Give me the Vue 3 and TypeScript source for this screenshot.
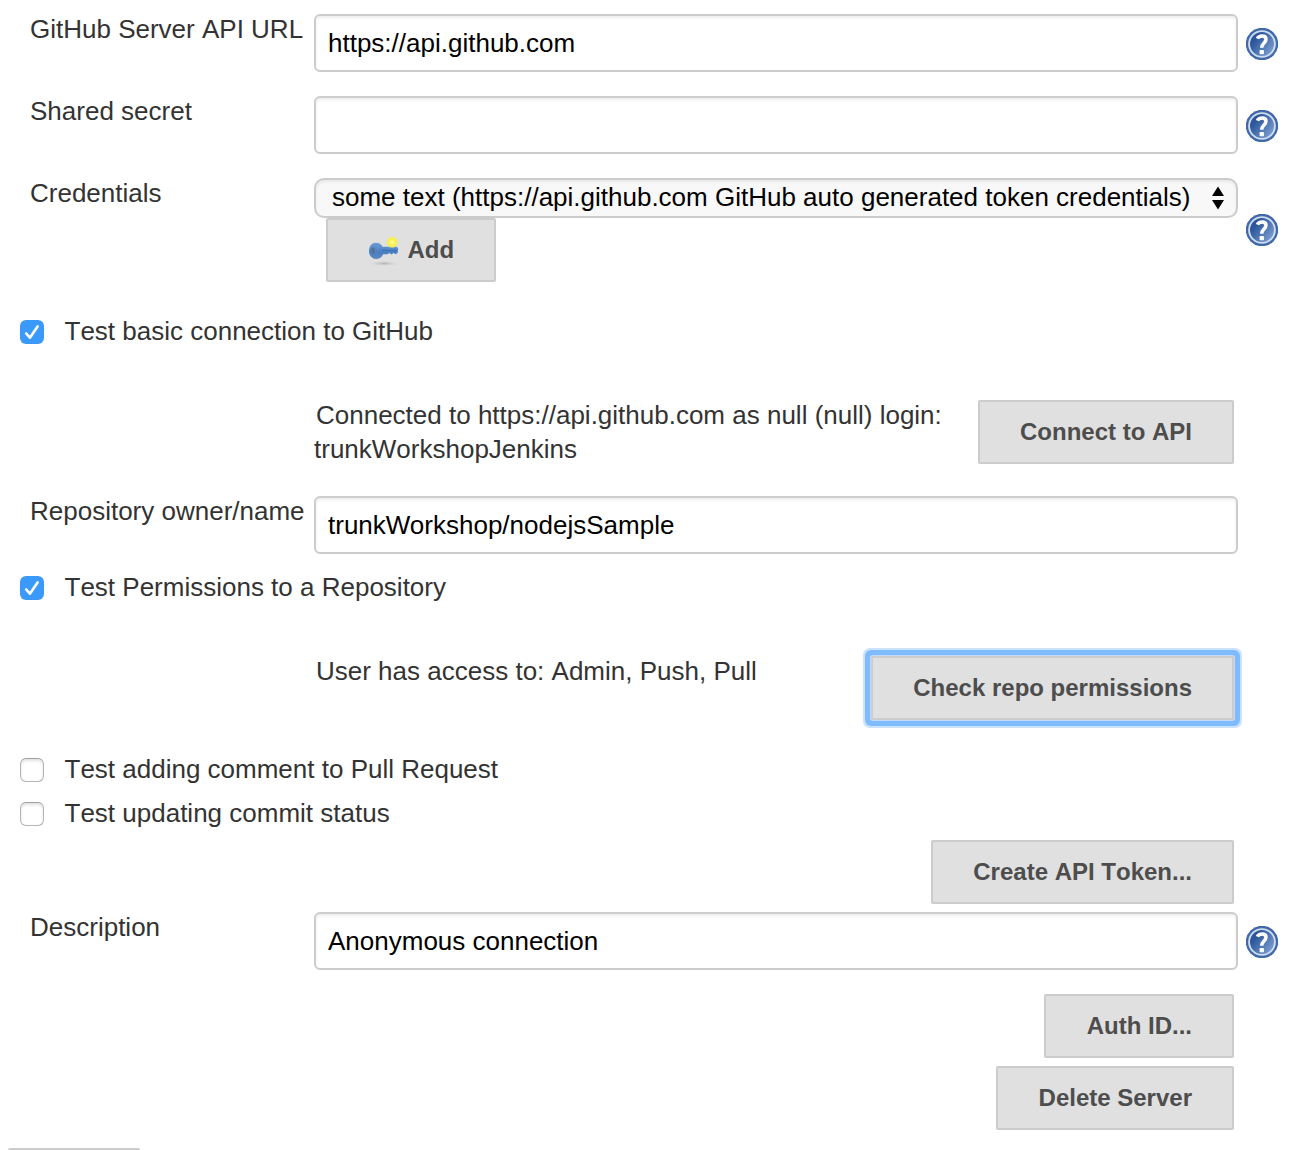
<script setup lang="ts">
import { defineComponent, h, ref } from 'vue'

const apiUrl = ref('https://api.github.com')
const secret = ref('')
const repository = ref('trunkWorkshop/nodejsSample')
const description = ref('Anonymous connection')
const testConnection = ref(true)
const testPermissions = ref(true)
const testComment = ref(false)
const testStatus = ref(false)

const HelpIcon = defineComponent({
  props: { uid: { type: String, required: true } },
  setup(props) {
    return () =>
      h('svg', { width: 32, height: 32, viewBox: '0 0 32 32', role: 'img' }, [
        h('defs', [
          h('linearGradient', { id: props.uid, x1: '0', y1: '0.1', x2: '1', y2: '0.9' }, [
            h('stop', { offset: '0.25', 'stop-color': '#2b569b' }),
            h('stop', { offset: '1', 'stop-color': '#86a9d8' }),
          ]),
        ]),
        h('circle', { cx: 16, cy: 16, r: 16.2, fill: '#4169a8' }),
        h('circle', { cx: 16, cy: 16, r: 12.9, fill: `url(#${props.uid})`, stroke: '#cfdcef', 'stroke-width': 1.9 }),
        h('path', {
          d: 'M11.4 10.6c.8-1.8 2.5-2.6 4.8-2.6 2.4 0 3.8 1.2 3.8 3.300 0 3.700-4.300 3.700-4.300 8.500',
          fill: 'none',
          stroke: '#fff',
          'stroke-width': 3.5,
        }),
        h('rect', { x: 13.6, y: 21.9, width: 4.3, height: 4.3, rx: 0.8, fill: '#fff' }),
      ])
  },
})
</script>

<template>
  <main class="page">
    <section class="row field">
      <label class="label">GitHub Server API URL</label>
      <input v-model="apiUrl" class="input" type="text" />
      <HelpIcon uid="help-url" class="help" />
    </section>
    <section class="row field">
      <label class="label">Shared secret</label>
      <input v-model="secret" class="input" type="text" />
      <HelpIcon uid="help-secret" class="help" />
    </section>
    <section class="row credentials">
      <label class="label">Credentials</label>
      <div class="cred-controls">
        <div class="select">
          <span>some text (https://api.github.com GitHub auto generated token credentials)</span>
          <svg width="12" height="24" viewBox="0 0 12 24">
            <path d="M6 0.5 12 10H0zM6 23.5 0 14h12z" fill="#000" />
          </svg>
        </div>
        <button class="btn add" type="button">
          <svg class="key" width="32" height="32" viewBox="0 0 32 32">
            <defs>
              <radialGradient id="glow">
                <stop offset="0" stop-color="#fffcb0" />
                <stop offset="0.3" stop-color="#fff66a" />
                <stop offset="0.7" stop-color="#f8ee48" />
                <stop offset="1" stop-color="#f0ea80" stop-opacity="0.1" />
              </radialGradient>
              <radialGradient id="shade">
                <stop offset="0" stop-color="#b4b4b4" />
                <stop offset="1" stop-color="#ccc" stop-opacity="0" />
              </radialGradient>
              <linearGradient id="metal" x1="0" y1="0" x2="0" y2="1">
                <stop offset="0" stop-color="#6b9bd3" />
                <stop offset="0.6" stop-color="#4a7fc1" />
                <stop offset="1" stop-color="#5c88c0" />
              </linearGradient>
            </defs>
            <ellipse cx="16" cy="28.5" rx="14" ry="2.6" fill="url(#shade)" />
            <path
              d="M8 7.8c3 0 5.4 1.5 6.5 4h14.2l1.5 1.8-.6 4.4-2 1.2-2-1.3-2.200 1.500-2-1.300-2 1.100h-4.300c-1 3-3.800 4.800-7.100 4.800-4 0-7-3.500-7-8.100s3-8.100 7-8.100z"
              fill="url(#metal)"
            />
            <path d="M14 15.5h15" stroke="#3b72b3" stroke-width="1.2" />
            <ellipse cx="5" cy="15.5" rx="1.8" ry="3" fill="#56718f" />
            <circle cx="24.2" cy="7.2" r="6.2" fill="url(#glow)" />
          </svg>
          <span>Add</span>
        </button>
      </div>
      <HelpIcon uid="help-credentials" class="help" />
    </section>

    <label class="check connection">
      <input v-model="testConnection" type="checkbox" />
      <span>Test basic connection to GitHub</span>
    </label>
    <section class="row result">
      <p>Connected to https://api.github.com as null (null) login: <br />trunkWorkshopJenkins</p>
      <button class="btn" type="button">Connect to API</button>
    </section>

    <section class="row field repo">
      <label class="label">Repository owner/name</label>
      <input v-model="repository" class="input" type="text" />
    </section>
    <label class="check">
      <input v-model="testPermissions" type="checkbox" />
      <span>Test Permissions to a Repository</span>
    </label>
    <section class="row result">
      <p>User has access to: Admin, Push, Pull</p>
      <button class="btn focused" type="button">Check repo permissions</button>
    </section>

    <label class="check comment">
      <input v-model="testComment" type="checkbox" />
      <span>Test adding comment to Pull Request</span>
    </label>
    <label class="check status">
      <input v-model="testStatus" type="checkbox" />
      <span>Test updating commit status</span>
    </label>
    <div class="actions create">
      <button class="btn" type="button">Create API Token...</button>
    </div>

    <section class="row field">
      <label class="label">Description</label>
      <input v-model="description" class="input" type="text" />
      <HelpIcon uid="help-description" class="help" />
    </section>
    <div class="actions">
      <button class="btn" type="button">Auth ID...</button>
      <button class="btn" type="button">Delete Server</button>
    </div>
    <button class="btn next" type="button" aria-label="Add server"></button>
  </main>
</template>

<style>
body {
  margin: 0;
  background: #fff;
}
</style>

<style scoped>
.page {
  box-sizing: border-box;
  display: flex;
  flex-direction: column;
  width: 1304px;
  height: 1150px;
  padding-top: 14px;
  overflow: hidden;
  color: #333;
  background: #fff;
  font: 26px/34px "Liberation Sans", Arial, sans-serif;
  font-kerning: none;
}
.page > * {
  flex-shrink: 0;
}
.row {
  display: flex;
  align-items: flex-start;
}
.field {
  height: 58px;
  margin-bottom: 24px;
}
.label {
  width: 284px;
  padding-left: 30px;
  margin-top: -2px;
  white-space: nowrap;
}
.input {
  box-sizing: border-box;
  width: 924px;
  height: 58px;
  padding: 0 12px;
  border: 2px solid #ccc;
  border-radius: 6px;
  outline: none;
  color: #000;
  background: #fff;
  box-shadow: inset 0 2px 3px rgba(0, 0, 0, 0.07);
  font: inherit;
  font-kerning: auto;
}
.help {
  display: block;
  margin: 14px 0 0 8px;
}
.credentials {
  height: 104px;
}
.credentials .help {
  margin-top: 36px;
}
.cred-controls {
  width: 924px;
}
.select {
  box-sizing: border-box;
  display: flex;
  justify-content: space-between;
  align-items: center;
  height: 40px;
  padding: 0 12px 2px 16px;
  border: 2px solid #ccc;
  border-radius: 10px;
  color: #000;
  background: #f8f8f8;
  box-shadow: inset 0 2px 3px rgba(0, 0, 0, 0.07);
  font-kerning: auto;
  white-space: nowrap;
}
.select svg {
  position: relative;
  top: 1px;
}
.btn {
  box-sizing: border-box;
  height: 64px;
  padding: 0 40px 1px 40.4px;
  border: 2px solid #ccc;
  border-radius: 2px;
  color: #4d4d4d;
  background: #e0e0e0;
  font: bold 24px/32px "Liberation Sans", Arial, sans-serif;
  font-kerning: none;
  white-space: nowrap;
}
.add {
  display: flex;
  align-items: center;
  gap: 7px;
  width: 170px;
  margin-left: 12px;
}
.key {
  flex-shrink: 0;
  margin-top: 2px;
}
.focused {
  outline: none;
  box-shadow: 0 0 0 1px #c2dcf8, 0 0 0 6px #7fbcff, 0 0 0 8px #cbe3ff;
}
.check {
  display: flex;
  align-items: center;
  height: 34px;
  padding-left: 20px;
  white-space: nowrap;
}
.check input {
  box-sizing: border-box;
  width: 24px;
  height: 24px;
  margin: 0 20.5px 0 0;
  appearance: none;
  border: 1px solid #b4b4b4;
  border-top-color: #a0a0a0;
  border-radius: 6px;
  background: #fff;
  box-shadow: inset 0 2px 3px rgba(0, 0, 0, 0.12);
}
.check input:checked {
  border: 0;
  background: #3b99fc url("data:image/svg+xml,%3Csvg xmlns='http://www.w3.org/2000/svg' viewBox='0 0 24 24'%3E%3Cpath d='M6.2 13.5 9.9 17.7 17.6 6.4' fill='none' stroke='white' stroke-width='2.6' stroke-linecap='round' stroke-linejoin='round'/%3E%3C/svg%3E");
  box-shadow: none;
}
.check span {
  position: relative;
  top: -1px;
}
.connection {
  margin-top: 33px;
}
.result {
  justify-content: space-between;
  height: 64px;
  margin: 51px 70px 32px 314px;
}
.result p {
  margin: -2px 0 0;
  text-indent: 2px;
}
.repo {
  margin-bottom: 17px;
}
.comment {
  margin-top: 1px;
}
.status {
  margin-top: 10px;
}
.actions {
  display: flex;
  flex-direction: column;
  align-items: flex-end;
  gap: 8px;
  padding-right: 70px;
}
.create {
  margin: 9px 0 8px;
}
.next {
  width: 132px;
  margin: 18px 0 0 8px;
}
</style>
